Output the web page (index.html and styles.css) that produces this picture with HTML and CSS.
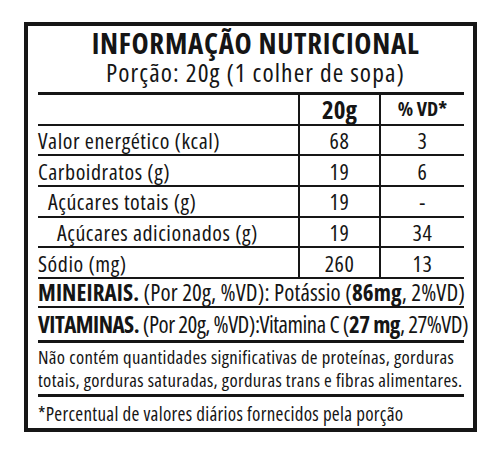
FILE: index.html
```html
<!DOCTYPE html>
<html lang="pt-BR">
<head>
<meta charset="utf-8">
<title>Informação Nutricional</title>
<link rel="stylesheet" href="styles.css">
</head>
<body>
<div class="label">
  <div class="head">
    <div class="title">INFORMAÇÃO NUTRICIONAL</div>
    <div class="portion">Porção: 20g (1 colher de sopa)</div>
  </div>
  <div class="table">
    <div class="row hdr"><div class="c name"></div><div class="c val"><b class="h20">20g</b></div><div class="c vd"><b class="hvd">% VD*</b></div></div>
    <div class="row"><div class="c name">Valor energético (kcal)</div><div class="c val">68</div><div class="c vd">3</div></div>
    <div class="row"><div class="c name">Carboidratos (g)</div><div class="c val">19</div><div class="c vd">6</div></div>
    <div class="row"><div class="c name ind1">Açúcares totais (g)</div><div class="c val">19</div><div class="c vd">-</div></div>
    <div class="row"><div class="c name ind2">Açúcares adicionados (g)</div><div class="c val">19</div><div class="c vd">34</div></div>
    <div class="row"><div class="c name">Sódio (mg)</div><div class="c val">260</div><div class="c vd">13</div></div>
  </div>
  <div class="line mine"><b>MINEIRAIS.</b>&nbsp;(Por 20g, %VD): Potássio (<b>86mg</b>, 2%VD)</div>
  <div class="line vit"><b>VITAMINAS.</b>&nbsp;(Por 20g, %VD):Vitamina C (<b>27 mg</b>, 27%VD)</div>
  <div class="note">Não contém quantidades significativas de proteínas, gorduras<br>totais, gorduras saturadas, gorduras trans e fibras alimentares.</div>
  <div class="foot">*Percentual de valores diários fornecidos pela porção</div>
</div>
</body>
</html>
```

FILE: styles.css
```css
html, body {
  margin: 0;
  padding: 0;
  background: #ffffff;
}
body {
  font-family: "Open Sans", "Liberation Sans", sans-serif;
  font-stretch: 87.5%;
  color: #151515;
}
.label {
  box-sizing: border-box;
  margin: 22px 0 0 24px;
  width: 453px;
  height: 410px;
  border: 4px solid #161616;
  padding: 0 9px 0 10px;
  display: flex;
  flex-direction: column;
}
.head {
  border-bottom: 3px solid #161616;
  padding: 2px 0 5px 9px;
  text-align: center;
}
.title {
  font-size: 29px;
  line-height: 30px;
  font-weight: bold;
  letter-spacing: 0.7px;
}
.portion {
  font-size: 25.5px;
  line-height: 29px;
  letter-spacing: 1.1px;
}
.table {
  display: grid;
  grid-template-columns: 260px 81px 85px;
  grid-auto-rows: 30.67px;
}
.row {
  display: contents;
}
.c {
  box-sizing: border-box;
  border-bottom: 2px solid #161616;
  display: flex;
  align-items: center;
  font-size: 22px;
  line-height: 24px;
  letter-spacing: 0.55px;
}
.val, .vd {
  border-left: 2px solid #161616;
  justify-content: center;
}
.ind1 { padding-left: 10px; }
.ind2 { padding-left: 19px; }
.h20 { font-size: 25px; letter-spacing: 0; }
.hvd { font-size: 20px; letter-spacing: 0; }
.line {
  font-size: 23px;
  line-height: 26px;
  display: flex;
  align-items: center;
  white-space: nowrap;
}
.mine {
  height: 29px;
  letter-spacing: 0.12px;
  border-bottom: 2px solid #161616;
  box-sizing: border-box;
}
.vit {
  height: 35px;
  letter-spacing: -0.5px;
  border-bottom: 3px solid #161616;
  box-sizing: border-box;
}
.note {
  font-size: 18.7px;
  line-height: 23px;
  letter-spacing: 0.33px;
  padding: 2px 0 3px;
  border-bottom: 3px solid #161616;
  white-space: nowrap;
}
.foot {
  font-size: 19px;
  line-height: 23px;
  letter-spacing: 0.3px;
  padding-top: 6px;
}
```
